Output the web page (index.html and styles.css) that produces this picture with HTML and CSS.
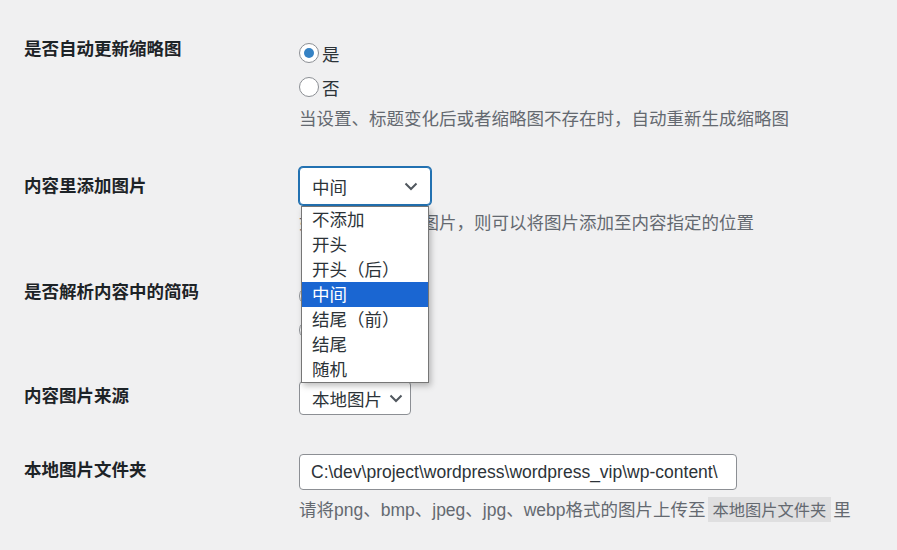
FILE: index.html
```html
<!DOCTYPE html>
<html lang="zh-CN">
<head>
  <meta charset="UTF-8">
  <title>缩略图设置</title>
  <link rel="stylesheet" href="styles.css">
</head>
<body>

  <div class="form-table">

    <div class="row row-update">
      <div class="th">是否自动更新缩略图</div>
      <div class="td">
        <label class="radio-line"><span class="radio checked"></span>是</label>
        <label class="radio-line"><span class="radio"></span>否</label>
        <p class="description">当设置、标题变化后或者缩略图不存在时，自动重新生成缩略图</p>
      </div>
    </div>

    <div class="row row-insert">
      <div class="th th-select">内容里添加图片</div>
      <div class="td">
        <div class="select-wrap">
          <div class="select focused">
            <span>中间</span>
            <svg class="chevron" width="14" height="9" viewBox="0 0 14 9"><path d="M1.5 1.5 L7 7 L12.5 1.5" fill="none" stroke="#50575e" stroke-width="2"/></svg>
          </div>
          <ul class="options">
            <li>不添加</li>
            <li>开头</li>
            <li>开头（后）</li>
            <li class="selected">中间</li>
            <li>结尾（前）</li>
            <li>结尾</li>
            <li>随机</li>
          </ul>
        </div>
        <p class="description desc-insert">如果内容中没有图片，则可以将图片添加至内容指定的位置</p>
      </div>
    </div>

    <div class="row row-shortcode">
      <div class="th">是否解析内容中的简码</div>
      <div class="td">
        <label class="radio-line"><span class="radio checked"></span>是</label>
        <label class="radio-line"><span class="radio"></span>否</label>
      </div>
    </div>

    <div class="row row-source">
      <div class="th th-small">内容图片来源</div>
      <div class="td">
        <div class="select small">
          <span>本地图片</span>
          <svg class="chevron" width="14" height="9" viewBox="0 0 14 9"><path d="M1.5 1.5 L7 7 L12.5 1.5" fill="none" stroke="#50575e" stroke-width="2"/></svg>
        </div>
      </div>
    </div>

    <div class="row row-folder">
      <div class="th th-input">本地图片文件夹</div>
      <div class="td">
        <input class="regular-text" type="text" value="C:\dev\project\wordpress\wordpress_vip\wp-content\">
        <p class="description desc-folder">请将png、bmp、jpeg、jpg、webp格式的图片上传至<code>本地图片文件夹</code>里</p>
      </div>
    </div>

  </div>

</body>
</html>
```

FILE: styles.css
```css
body {
  margin: 0;
  background-color: #f0f0f1;
  color: #1d2327;
  font-family: "Liberation Sans", "Noto Sans CJK SC", sans-serif;
  font-size: 17.5px;
}
.form-table {
  padding: 19px 0 0 24px;
}
.row {
  display: flex;
  padding: 17px 0;
}
.th {
  width: 275px;
  flex-shrink: 0;
  font-weight: bold;
  line-height: 26px;
}
.td {
  flex: 1;
}
.radio-line {
  display: flex;
  align-items: center;
  height: 34px;
  color: #2c3338;
}
.radio {
  box-sizing: border-box;
  width: 20px;
  height: 20px;
  margin-right: 3px;
  border: 1px solid #8c8f94;
  border-radius: 50%;
  background-color: #fff;
  display: flex;
  align-items: center;
  justify-content: center;
}
.radio.checked::before {
  content: "";
  width: 10px;
  height: 10px;
  border-radius: 50%;
  background-color: #3582c4;
}
.description {
  margin: 0;
  line-height: 30px;
  color: #646970;
}

/* rows */
.row-insert {
  padding-top: 16px;
}
.row-shortcode {
  padding-top: 24px;
}
.th-select {
  margin-top: 6px;
}
.th-small {
  margin-top: 2px;
}
.desc-insert {
  margin-top: 3px;
}
.row-folder {
  padding-top: 22px;
}
.th-input {
  margin-top: 3px;
}
.desc-folder {
  margin-top: 5px;
}

/* select */
.select-wrap {
  position: relative;
  width: 132px;
}
.select {
  box-sizing: border-box;
  display: flex;
  align-items: center;
  justify-content: space-between;
  width: 132px;
  height: 38px;
  padding: 0 12px 0 12px;
  border: 1px solid #8c8f94;
  border-radius: 4px;
  background-color: #fff;
  color: #2c3338;
}
.select.focused {
  border-color: #2271b1;
  box-shadow: 0 0 0 1px #2271b1;
}
.select.small {
  width: 112px;
  height: 34px;
  padding-right: 7px;
}
.options {
  position: absolute;
  top: 39px;
  left: 2px;
  width: 128px;
  box-sizing: border-box;
  margin: 0;
  padding: 0;
  list-style: none;
  background-color: #fff;
  border: 1px solid #767676;
  box-shadow: 2px 3px 6px rgba(0, 0, 0, 0.25);
  color: #2c3338;
  z-index: 2;
}
.options li {
  height: 25px;
  line-height: 26px;
  padding-left: 10px;
}
.options li.selected {
  background-color: #1a66d2;
  color: #fff;
}

/* input */
.regular-text {
  box-sizing: border-box;
  display: block;
  width: 438px;
  height: 36px;
  padding: 0 11px;
  border: 1px solid #8c8f94;
  border-radius: 4px;
  background-color: #fff;
  color: #2c3338;
  font-family: "Liberation Sans", "Noto Sans CJK SC", sans-serif;
  font-size: 17.5px;
}
code {
  margin: 0 2px;
  padding: 0 5px;
  display: inline-block;
  line-height: 25px;
  background-color: rgba(0, 0, 0, 0.07);
  font-family: "Noto Sans CJK SC", sans-serif;
  font-size: 16.25px;
}
```
